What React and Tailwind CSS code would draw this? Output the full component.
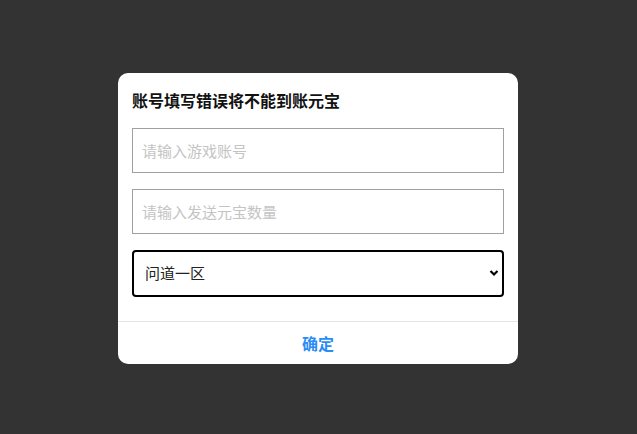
import React from "react";

export default function App() {
  const font = { fontFamily: '"Noto Sans CJK SC", "Noto Sans", sans-serif' };
  return (
    <div
      className="w-[637px] h-[434px] bg-[#333333] flex items-start justify-start pl-[118px] pt-[73px]"
      style={font}
    >
      <div className="w-[400px] bg-white rounded-[10px] overflow-hidden flex flex-col">
        <div className="px-[14px] pt-[15px] pb-[24px] flex flex-col">
          <div className="h-[24px] leading-[24px] text-[16px] font-bold text-[#111]">
            账号填写错误将不能到账元宝
          </div>
          <input
            className="mt-[16px] h-[45px] w-full border border-[#a0a0a0] pl-[9px] text-[15px] text-[#333] outline-none placeholder:text-[#c4c4c4]"
            placeholder="请输入游戏账号"
          />
          <input
            className="mt-[16px] h-[45px] w-full border border-[#a0a0a0] pl-[9px] text-[15px] text-[#333] outline-none placeholder:text-[#c4c4c4]"
            placeholder="请输入发送元宝数量"
          />
          <div className="relative mt-[16px]">
            <select
              className="appearance-none h-[47px] w-full border-2 border-black rounded-[4px] pl-[11px] text-[15px] text-[#222] bg-white outline-none"
              defaultValue="1"
            >
              <option value="1">问道一区</option>
            </select>
            <svg
              className="absolute right-[5px] top-[19px] pointer-events-none"
              width="10"
              height="8"
              viewBox="0 0 10 8"
            >
              <path d="M1.5 2 L5 5.5 L8.5 2" fill="none" stroke="#000" strokeWidth="2.2" />
            </svg>
          </div>
        </div>
        <div className="border-t border-[#e5e5e5] h-[43px] flex items-center justify-center text-[16px] font-bold text-[#2b8cf5]">
          确定
        </div>
      </div>
    </div>
  );
}
